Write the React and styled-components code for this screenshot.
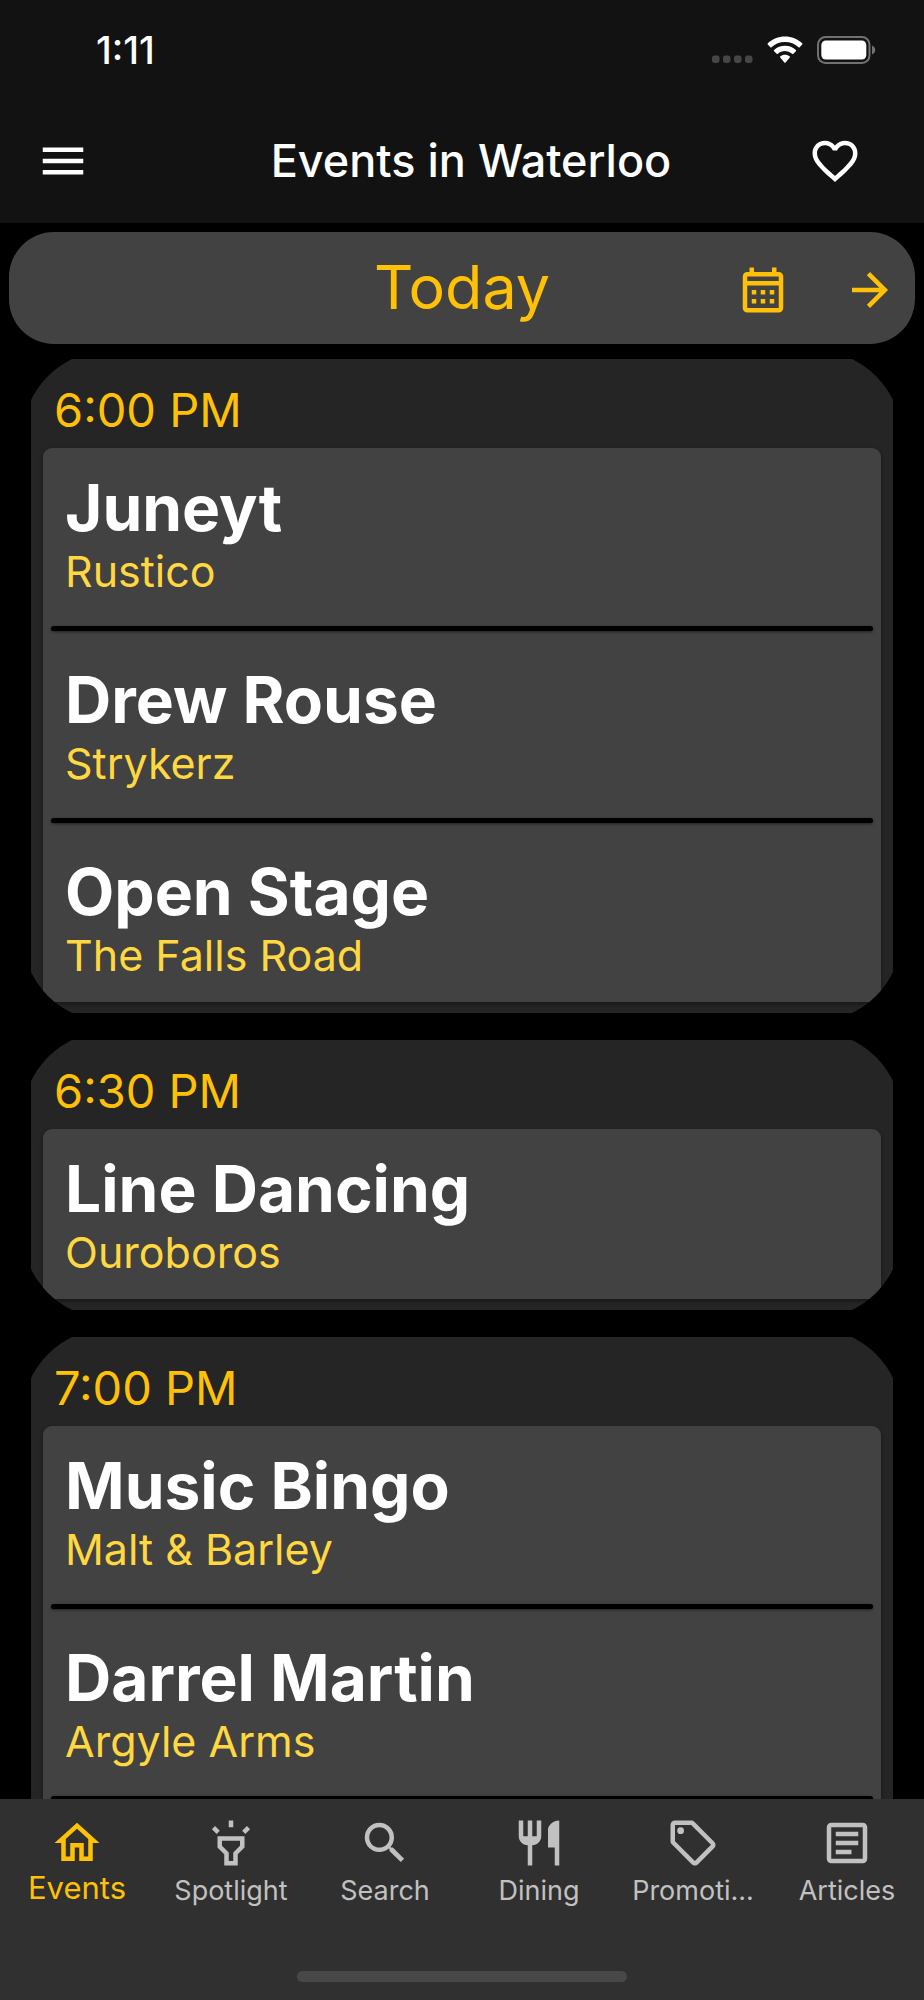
import styled, { createGlobalStyle } from 'styled-components'
import {
  MdArrowForward,
  MdFavoriteBorder,
  MdMenu,
  MdOutlineArticle,
  MdOutlineCalendarMonth,
  MdOutlineHighlight,
  MdOutlineHome,
  MdOutlineRestaurant,
  MdOutlineSell,
  MdSearch,
} from 'react-icons/md'

const GlobalStyle = createGlobalStyle`
  * {
    box-sizing: border-box;
  }
  body {
    margin: 0;
    background: #000;
    color: #fff;
    font-family: Inter, Roboto, sans-serif;
  }
  h1, h2, h3, p, ul {
    margin: 0;
    padding: 0;
    font-weight: 400;
    list-style: none;
  }
`

const Screen = styled.div`
  display: flex;
  flex-direction: column;
  height: 100vh;
`

const Header = styled.header`
  background: #121212;
`

const StatusBar = styled.div`
  display: flex;
  align-items: center;
  justify-content: space-between;
  height: 98px;
  padding: 2px 48px 0 96px;
`

const Clock = styled.time`
  font-size: 38px;
  font-weight: 500;
`

const StatusIcons = styled.div`
  display: flex;
  align-items: center;
  gap: 14px;
`

const AppBar = styled.div`
  display: grid;
  grid-template-columns: 1fr auto 1fr;
  align-items: center;
  height: 125px;
  padding: 0 62px 0 36px;
`

const AppTitle = styled.h1`
  padding-left: 44px;
  font-size: 45px;
  font-weight: 500;
`

const IconButton = styled.button`
  display: flex;
  padding: 0;
  border: 0;
  background: none;
  color: inherit;
  font-size: 54px;
  justify-self: ${({ $align }) => $align || 'center'};
`

const DayBar = styled.div`
  display: grid;
  grid-template-columns: 1fr auto 1fr;
  align-items: center;
  height: 112px;
  margin: 9px 9px 6px;
  padding: 0 18px;
  border-radius: 45px;
  background: #424242;
  color: #ffc107;
  flex-shrink: 0;
`

const DayTitle = styled.h2`
  grid-column: 2;
  padding-bottom: 2px;
  font-size: 61px;
`

const DayActions = styled.div`
  display: flex;
  justify-content: flex-end;
  gap: 53px;
  padding-top: 4px;
`

const Schedule = styled.main`
  display: flex;
  flex: 1;
  flex-direction: column;
  gap: 9px;
  min-height: 0;
  padding: 0 22px;
  overflow-y: auto;
  scrollbar-width: none;
`

// The rounded clip sits outside the square card, so its corners look cut
const GroupClip = styled.section`
  flex-shrink: 0;
  padding: 9px;
  border-radius: ${({ $open }) => ($open ? '89px 89px 0 0' : '89px')};
  overflow: hidden;
`

const GroupCard = styled.div`
  padding: 0 12px 11px;
  background: #252525;
`

const GroupTime = styled.h2`
  height: 89px;
  padding: 6px 0 0 11px;
  color: #ffc107;
  font-size: 47px;
  line-height: 89px;
`

const EventList = styled.ul`
  border-radius: ${({ $open }) => ($open ? '9px 9px 0 0' : '9px')};
  background: #424242;
  box-shadow: 0 2px 4px rgba(0, 0, 0, 0.4);
`

const EventLink = styled.a`
  display: flex;
  flex-direction: column;
  height: 170px;
  padding: 22px 22px 0;
  color: #fff;
  text-decoration: none;
`

const EventName = styled.h3`
  font-size: 64px;
  font-weight: 700;
  line-height: 76px;
`

const Venue = styled.p`
  color: #ffd740;
  font-size: 43px;
  line-height: 50px;
`

const Divider = styled.div`
  height: 5px;
  margin: 8px 8px 9px;
  border-radius: 3px;
  background: #000;
  box-shadow: 0 1px 3px rgba(0, 0, 0, 0.5);
`

const BottomBar = styled.footer`
  display: flex;
  flex-direction: column;
  align-items: center;
  justify-content: space-between;
  height: 201px;
  padding: 17px 0 18px;
  background: #303030;
`

const Tabs = styled.nav`
  display: flex;
  width: 100%;
`

const Tab = styled.a`
  display: flex;
  flex: 1;
  flex-direction: column;
  align-items: center;
  min-width: 0;
  padding: 0 12px;
  color: ${({ $active }) => ($active ? '#ffc107' : '#c1c1c1')};
  font-size: ${({ $active }) => ($active ? '31px' : '27px')};
  line-height: ${({ $active }) => ($active ? '36px' : '42px')};
  text-decoration: none;

  svg {
    flex-shrink: 0;
    width: 54px;
    height: 54px;
  }
`

const TabLabel = styled.span`
  max-width: 100%;
  overflow: hidden;
  text-overflow: ellipsis;
  white-space: nowrap;
`

const HomeIndicator = styled.div`
  width: 330px;
  height: 11px;
  border-radius: 6px;
  background: #484848;
`

const CellularIcon = () => (
  <svg width="41" height="28" viewBox="0 0 41 28" fill="#464646" aria-hidden="true">
    <rect x="0" y="19.5" width="7.5" height="7.5" rx="2.4" />
    <rect x="11" y="19.5" width="7.5" height="7.5" rx="2.4" />
    <rect x="22" y="19.5" width="7.5" height="7.5" rx="2.4" />
    <rect x="33" y="19.5" width="7.5" height="7.5" rx="2.4" />
  </svg>
)

const WifiIcon = () => (
  <svg width="36" height="28" viewBox="0 0 36 28" fill="#fff" aria-hidden="true">
    <path d="M18 .6c6.6 0 12.7 2.5 17.2 6.7.4.4.4.9 0 1.3l-2.5 2.6c-.3.3-.9.3-1.2 0A19.800 19.800 0 0 0 18 6a19.800 19.800 0 0 0-13.500 5.200c-.3.300-.9.300-1.200 0L.8 8.600c-.4-.4-.4-.9 0-1.300C5.300 3.100 11.400.6 18 .6z" />
    <path d="M18 9.700c4.200 0 8 1.600 10.900 4.200.4.300.4.900 0 1.300l-2.600 2.600c-.3.300-.8.300-1.200 0A10.700 10.700 0 0 0 18 15c-2.700 0-5.200 1-7.100 2.800-.4.300-.9.300-1.200 0l-2.600-2.600c-.4-.4-.4-1 0-1.300A16.200 16.200 0 0 1 18 9.700z" />
    <path d="M18 18.700c1.800 0 3.500.7 4.800 1.700.4.300.4.900 0 1.200l-4.200 4.900c-.3.400-.9.400-1.200 0l-4.200-4.900c-.4-.3-.4-.9 0-1.200 1.300-1 3-1.700 4.800-1.700z" />
  </svg>
)

const BatteryIcon = () => (
  <svg width="59" height="28" viewBox="0 0 59 28" aria-hidden="true">
    <rect x="1" y="1" width="51.5" height="26" rx="7.5" fill="none" stroke="#717171" strokeWidth="2" />
    <rect x="4.3" y="4.5" width="45" height="19" rx="4.5" fill="#fff" />
    <path d="M55 9.5c2 .8 3.200 2.500 3.200 4.500S57 17.700 55 18.500z" fill="#717171" />
  </svg>
)

const groups = [
  {
    time: '6:00 PM',
    events: [
      { name: 'Juneyt', venue: 'Rustico' },
      { name: 'Drew Rouse', venue: 'Strykerz' },
      { name: 'Open Stage', venue: 'The Falls Road' },
    ],
  },
  {
    time: '6:30 PM',
    events: [{ name: 'Line Dancing', venue: 'Ouroboros' }],
  },
  {
    time: '7:00 PM',
    open: true,
    events: [
      { name: 'Music Bingo', venue: 'Malt & Barley' },
      { name: 'Darrel Martin', venue: 'Argyle Arms' },
    ],
  },
]

const tabs = [
  { label: 'Events', icon: MdOutlineHome },
  { label: 'Spotlight', icon: MdOutlineHighlight },
  { label: 'Search', icon: MdSearch },
  { label: 'Dining', icon: MdOutlineRestaurant },
  { label: 'Promoti...', icon: MdOutlineSell },
  { label: 'Articles', icon: MdOutlineArticle },
]

const EventGroup = ({ time, events, open }) => (
  <GroupClip $open={open}>
    <GroupCard>
      <GroupTime>{time}</GroupTime>
      <EventList $open={open}>
        {events.map(({ name, venue }, index) => (
          <li key={name}>
            <EventLink href="#">
              <EventName>{name}</EventName>
              <Venue>{venue}</Venue>
            </EventLink>
            {(open || index < events.length - 1) && <Divider />}
          </li>
        ))}
      </EventList>
    </GroupCard>
  </GroupClip>
)

const App = () => (
  <>
    <GlobalStyle />
    <Screen>
      <Header>
        <StatusBar>
          <Clock>1:11</Clock>
          <StatusIcons>
            <CellularIcon />
            <WifiIcon />
            <BatteryIcon />
          </StatusIcons>
        </StatusBar>
        <AppBar>
          <IconButton $align="start" aria-label="Menu">
            <MdMenu />
          </IconButton>
          <AppTitle>Events in Waterloo</AppTitle>
          <IconButton $align="end" aria-label="Favourites">
            <MdFavoriteBorder />
          </IconButton>
        </AppBar>
      </Header>

      <DayBar>
        <DayTitle>Today</DayTitle>
        <DayActions>
          <IconButton aria-label="Pick a date">
            <MdOutlineCalendarMonth />
          </IconButton>
          <IconButton aria-label="Next day">
            <MdArrowForward />
          </IconButton>
        </DayActions>
      </DayBar>

      <Schedule>
        {groups.map((group) => (
          <EventGroup key={group.time} {...group} />
        ))}
      </Schedule>

      <BottomBar>
        <Tabs>
          {tabs.map(({ label, icon: Icon }, index) => (
            <Tab key={label} href="#" $active={index === 0}>
              <Icon />
              <TabLabel>{label}</TabLabel>
            </Tab>
          ))}
        </Tabs>
        <HomeIndicator />
      </BottomBar>
    </Screen>
  </>
)

export default App
